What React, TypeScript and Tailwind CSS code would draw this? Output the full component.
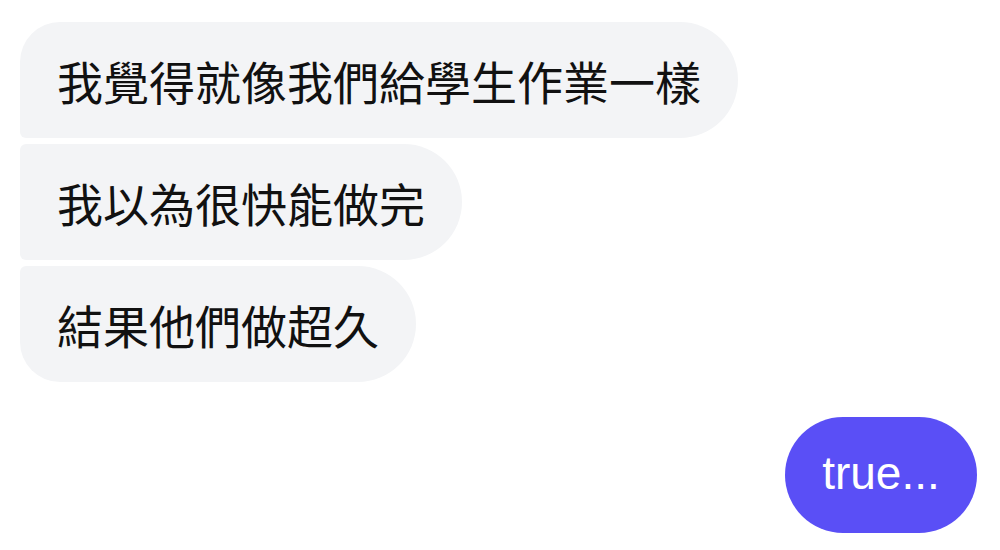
import { FC } from 'react';

const received = [
    { text: '我覺得就像我們給學生作業一樣', corners: 'rounded-tl-[40px] rounded-bl-[6px]' },
    { text: '我以為很快能做完', corners: 'rounded-tl-[6px] rounded-bl-[6px]' },
    { text: '結果他們做超久', corners: 'rounded-tl-[6px] rounded-bl-[40px]' },
];

const Bubble: FC<{ text: string; corners: string }> = ({ text, corners }) => (
    <div
        className={`h-[116px] flex items-center px-[37px] bg-[#f3f4f6] text-[#111111] text-[46px] rounded-r-[58px] ${corners}`}
        style={{ fontFamily: '"Noto Sans CJK TC", "Noto Sans", sans-serif' }}
    >
        <span className="leading-none">{text}</span>
    </div>
);

export default function App() {
    return (
        <div className="w-[1000px] h-[550px] bg-white overflow-hidden pt-[22px] pl-[20px] pr-[23px]">
            <div className="flex flex-col items-start gap-[6px]">
                {received.map((m) => (
                    <Bubble key={m.text} text={m.text} corners={m.corners} />
                ))}
            </div>
            <div className="flex justify-end mt-[35px]">
                <div
                    className="h-[116px] w-[192px] flex items-center justify-center rounded-[58px] bg-[#5a4ff6] text-white text-[46px]"
                    style={{ fontFamily: '"Liberation Sans", Arial, sans-serif' }}
                >
                    <span className="leading-none -mt-[4px]">true...</span>
                </div>
            </div>
        </div>
    );
}
